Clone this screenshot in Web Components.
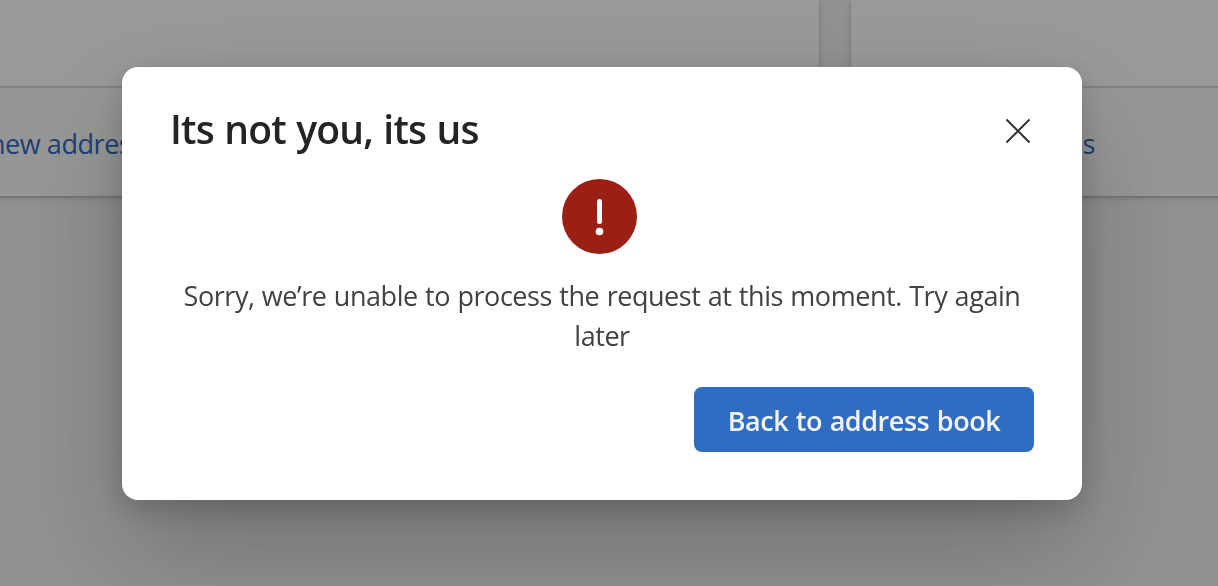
<!DOCTYPE html>
<html lang="en">
<head>
<meta charset="utf-8">
<title>Address book</title>
<style>
  body {
    margin: 0;
    height: 586px;
    overflow: hidden;
    background: #f2f2f2;
    font-family: "Segoe UI", "Open Sans", "Noto Sans", sans-serif;
    color: #3b3b3b;
  }
</style>
</head>
<body>
<address-list>
  <address-card>new address</address-card>
  <address-card>Add new address</address-card>
</address-list>
<modal-overlay>
  <error-dialog>
    <span slot="title">Its not you, its us</span>
    <span slot="message">Sorry, we’re unable to process the request at this moment. Try again later</span>
    <primary-button slot="actions">Back to address book</primary-button>
  </error-dialog>
</modal-overlay>

<script>
class AddressList extends HTMLElement {
  constructor() {
    super();
    this.attachShadow({ mode: "open" });
    this.shadowRoot.innerHTML = `
      <style>
        /* the first card starts outside the viewport */
        :host {
          display: grid;
          grid-template-columns: 864px 399px;
          column-gap: 32px;
          height: 196px;
          margin-left: -45px;
        }
      </style>
      <slot></slot>
    `;
  }
}

class AddressCard extends HTMLElement {
  constructor() {
    super();
    this.attachShadow({ mode: "open" });
    this.shadowRoot.innerHTML = `
      <style>
        :host {
          display: flex;
          flex-direction: column;
          background: #fff;
          box-shadow: 0 3.2px 7.2px rgba(0, 0, 0, .13), 0 .6px 1.8px rgba(0, 0, 0, .2);
        }
        .content {
          height: 86px;
        }
        footer {
          flex: 1;
          display: flex;
          align-items: center;
          padding-left: 34px;
          border-top: 2px solid #d8d8d8;
          background: #fbfbfb;
        }
        a {
          margin-top: 3px;
          font-size: 27px;
          line-height: 36px;
          letter-spacing: -.45px;
          white-space: nowrap;
          color: #2f6dc3;
        }
      </style>
      <div class="content"></div>
      <footer><a><slot></slot></a></footer>
    `;
  }
}

class ModalOverlay extends HTMLElement {
  constructor() {
    super();
    this.attachShadow({ mode: "open" });
    this.shadowRoot.innerHTML = `
      <style>
        :host {
          position: fixed;
          inset: 0;
          box-sizing: border-box;
          display: flex;
          align-items: flex-start;
          padding: 67px 136px 0 122px;
          background: rgba(0, 0, 0, .4);
        }
      </style>
      <slot></slot>
    `;
  }
}

class ErrorDialog extends HTMLElement {
  constructor() {
    super();
    this.attachShadow({ mode: "open" });
    this.shadowRoot.innerHTML = `
      <style>
        :host {
          box-sizing: border-box;
          display: flex;
          flex-direction: column;
          width: 960px;
          height: 433px;
          padding: 32px 48px 48px;
          border-radius: 16px;
          background: #fff;
          box-shadow: 0 51.2px 115.2px rgba(0, 0, 0, .22), 0 9.6px 28.8px rgba(0, 0, 0, .18);
        }
        header {
          display: flex;
          justify-content: space-between;
          align-items: center;
          height: 64px;
        }
        h1 {
          margin: 0 0 4px;
          font-size: 39px;
          font-weight: 600;
          line-height: 60px;
          letter-spacing: -.8px;
          word-spacing: 1px;
          color: #242424;
        }
        button {
          display: flex;
          padding: 3px;
          border: 0;
          background: none;
        }
        .icon {
          display: block;
          margin: 16px 0 0 392px;
        }
        p {
          margin: 22px 0 0;
          font-size: 27px;
          line-height: 40px;
          letter-spacing: -.45px;
          word-spacing: .8px;
          text-align: center;
          color: #424242;
        }
        .actions {
          display: flex;
          justify-content: flex-end;
          margin-top: auto;
        }
      </style>
      <header>
        <h1><slot name="title"></slot></h1>
        <button aria-label="Close">
          <svg width="26" height="26" viewBox="0 0 26 26" fill="none" stroke="#333" stroke-width="2">
            <path d="M1.5 1.5 24.5 24.5M24.5 1.5 1.5 24.5"/>
          </svg>
        </button>
      </header>
      <svg class="icon" width="75" height="75" viewBox="0 0 75 75">
        <circle cx="37.5" cy="37.5" r="37.5" fill="#9b1f15"/>
        <rect x="35" y="20" width="5" height="25" rx="2.5" fill="#fff"/>
        <circle cx="37.5" cy="52.5" r="3.8" fill="#fff"/>
      </svg>
      <p><slot name="message"></slot></p>
      <div class="actions"><slot name="actions"></slot></div>
    `;
  }
}

class PrimaryButton extends HTMLElement {
  constructor() {
    super();
    this.attachShadow({ mode: "open" });
    this.shadowRoot.innerHTML = `
      <style>
        :host {
          display: block;
        }
        button {
          width: 340px;
          height: 65px;
          padding: 2px 0 0;
          border: 0;
          border-radius: 8px;
          background: #2f6dc3;
          font: 600 27px/40px "Segoe UI", "Open Sans", "Noto Sans", sans-serif;
          letter-spacing: -.45px;
          word-spacing: 1px;
          white-space: nowrap;
          color: #f3f3f6;
        }
      </style>
      <button><slot></slot></button>
    `;
  }
}

customElements.define("address-list", AddressList);
customElements.define("address-card", AddressCard);
customElements.define("modal-overlay", ModalOverlay);
customElements.define("error-dialog", ErrorDialog);
customElements.define("primary-button", PrimaryButton);
</script>
</body>
</html>
